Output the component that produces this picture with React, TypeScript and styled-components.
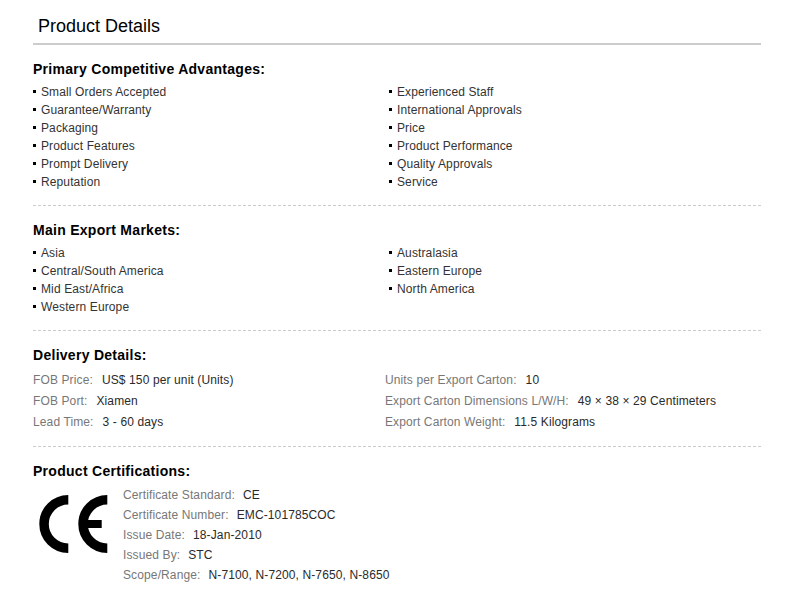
import styled, { createGlobalStyle } from "styled-components";

const GlobalStyle = createGlobalStyle`
  html, body {
    margin: 0;
    padding: 0;
    background: #fff;
    font-family: "Liberation Sans", Arial, sans-serif;
    font-size: 12px;
    letter-spacing: 0.12px;
    color: #333;
  }
  ul { margin: 0; padding: 0; list-style: none; }
`;

const advantages = [
  "Small Orders Accepted",
  "Experienced Staff",
  "Guarantee/Warranty",
  "International Approvals",
  "Packaging",
  "Price",
  "Product Features",
  "Product Performance",
  "Prompt Delivery",
  "Quality Approvals",
  "Reputation",
  "Service",
];

const markets = [
  "Asia",
  "Australasia",
  "Central/South America",
  "Eastern Europe",
  "Mid East/Africa",
  "North America",
  "Western Europe",
];

const deliveryLeft = [
  ["FOB Price:", "US$ 150 per unit (Units)"],
  ["FOB Port:", "Xiamen"],
  ["Lead Time:", "3 - 60 days"],
];

const deliveryRight = [
  ["Units per Export Carton:", "10"],
  ["Export Carton Dimensions L/W/H:", "49 × 38 × 29 Centimeters"],
  ["Export Carton Weight:", "11.5 Kilograms"],
];

const certs = [
  ["Certificate Standard:", "CE"],
  ["Certificate Number:", "EMC-101785COC"],
  ["Issue Date:", "18-Jan-2010"],
  ["Issued By:", "STC"],
  ["Scope/Range:", "N-7100, N-7200, N-7650, N-8650"],
];

const CeMark = () => (
  <svg width="72" height="60" viewBox="0 0 72 60">
    <path
      d="M30.3 4.75 A 24.25 24.25 0 0 0 30.3 53.25"
      fill="none"
      stroke="#000"
      strokeWidth="9.5"
    />
    <path
      d="M69.3 4.75 A 24.25 24.25 0 0 0 69.3 53.25"
      fill="none"
      stroke="#000"
      strokeWidth="9.5"
    />
    <rect x="48" y="25" width="15.7" height="8" fill="#000" />
  </svg>
);

const App = () => (
  <Page>
    <GlobalStyle />
    <Title>Product Details</Title>

    <Section>
      <Heading>Primary Competitive Advantages:</Heading>
      <BulletGrid>
        {advantages.map((item) => (
          <Bullet key={item}>{item}</Bullet>
        ))}
      </BulletGrid>
    </Section>

    <Section>
      <Heading>Main Export Markets:</Heading>
      <BulletGrid>
        {markets.map((item) => (
          <Bullet key={item}>{item}</Bullet>
        ))}
      </BulletGrid>
    </Section>

    <Section>
      <Heading>Delivery Details:</Heading>
      <DeliveryGrid>
        <div>
          {deliveryLeft.map(([label, value]) => (
            <DeliveryRow key={label}>
              <Label>{label}</Label>
              <Value>{value}</Value>
            </DeliveryRow>
          ))}
        </div>
        <div>
          {deliveryRight.map(([label, value]) => (
            <DeliveryRow key={label}>
              <Label>{label}</Label>
              <Value>{value}</Value>
            </DeliveryRow>
          ))}
        </div>
      </DeliveryGrid>
    </Section>

    <LastSection>
      <Heading>Product Certifications:</Heading>
      <CertBody>
        <CertLogo>
          <CeMark />
        </CertLogo>
        <div>
          {certs.map(([label, value]) => (
            <CertRow key={label}>
              <Label>{label}</Label>
              <Value>{value}</Value>
            </CertRow>
          ))}
        </div>
      </CertBody>
    </LastSection>
  </Page>
);

const Page = styled.div`
  width: 728px;
  margin-left: 33px;
`;

const Title = styled.h1`
  margin: 0;
  height: 45px;
  box-sizing: border-box;
  padding: 16px 0 0 5px;
  font-size: 18px;
  line-height: 21px;
  font-weight: 400;
  letter-spacing: 0;
  color: #000;
  border-bottom: 2px solid #ccc;
`;

const Section = styled.section`
  padding: 15px 0 14px;
  border-bottom: 1px dashed #ccc;
`;

const LastSection = styled.section`
  padding-top: 15px;
`;

const Heading = styled.h2`
  margin: 0;
  font-size: 14px;
  line-height: 18px;
  font-weight: 700;
  letter-spacing: 0.28px;
  color: #000;
`;

const BulletGrid = styled.ul`
  display: grid;
  grid-template-columns: 356px 1fr;
  margin-top: 5px;
`;

const Bullet = styled.li`
  position: relative;
  padding-left: 8px;
  line-height: 18px;

  &::before {
    content: "";
    position: absolute;
    left: 0;
    top: 7px;
    width: 3px;
    height: 3px;
    background: #000;
  }
`;

const DeliveryGrid = styled.div`
  display: grid;
  grid-template-columns: 352px 1fr;
  margin: 6px 0 -1px;
`;

const DeliveryRow = styled.div`
  display: flex;
  gap: 9px;
  line-height: 21px;
`;

const Label = styled.span`
  color: #777;
`;

const Value = styled.span`
  color: #2a2a2a;
`;

const CertBody = styled.div`
  display: flex;
  margin-top: 5px;
`;

const CertLogo = styled.div`
  width: 90px;
  padding: 10px 0 0 5px;
  box-sizing: border-box;
`;

const CertRow = styled.div`
  display: flex;
  gap: 8px;
  line-height: 20px;
`;

export default App;
